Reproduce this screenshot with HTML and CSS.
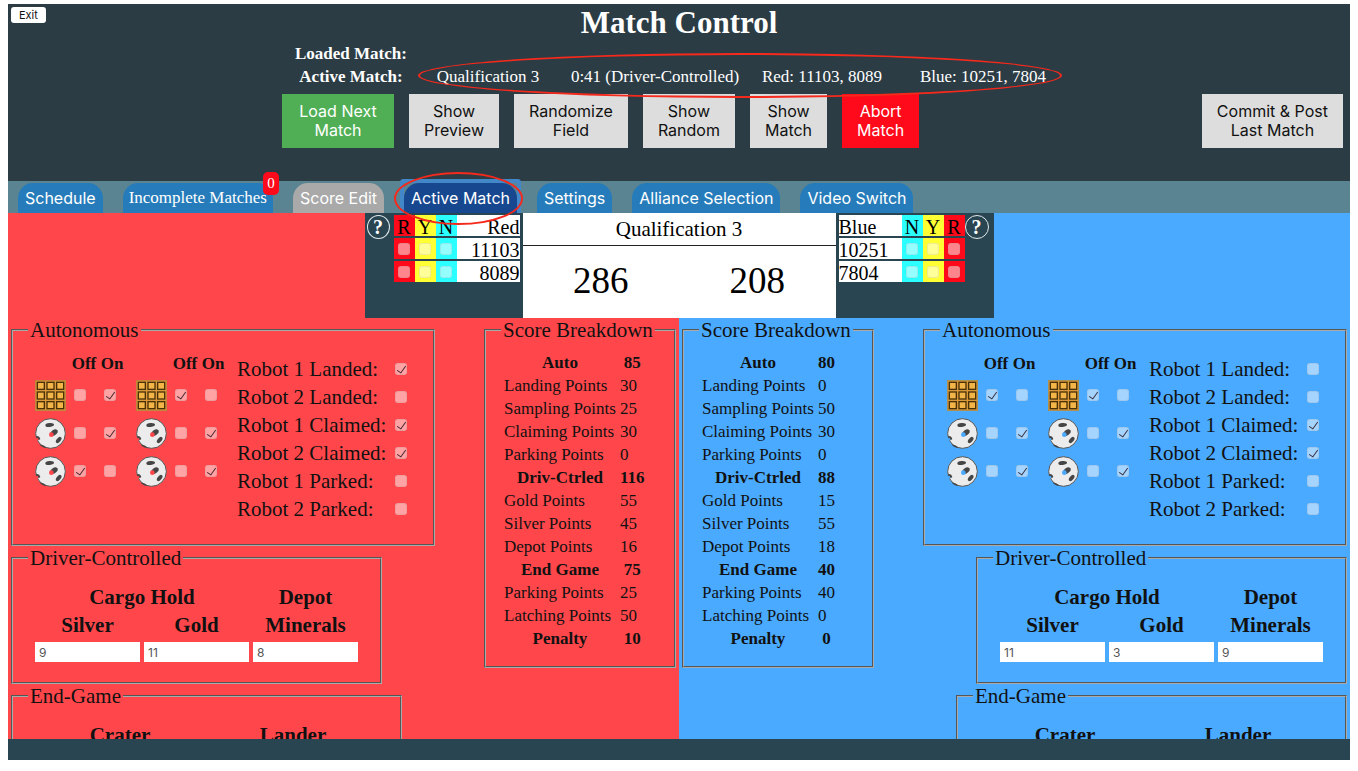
FILE: index.html
```html
<!DOCTYPE html>
<html lang="en">
<head>
<meta charset="utf-8">
<title>Match Control</title>
<link rel="stylesheet" href="styles.css">
</head>
<body>
<svg class="sprite" aria-hidden="true">
  <symbol id="gold" viewBox="0 0 93 93">
    <rect x="1" y="1" width="91" height="91" fill="#d9983a" stroke="#b58a3c" stroke-width="2"/>
    <g fill="#f4b548" stroke="#4a3208" stroke-width="4">
      <rect x="7" y="7" width="21" height="21"/><rect x="36" y="7" width="21" height="21"/><rect x="65" y="7" width="21" height="21"/>
      <rect x="7" y="36" width="21" height="21"/><rect x="36" y="36" width="21" height="21"/><rect x="65" y="36" width="21" height="21"/>
      <rect x="7" y="65" width="21" height="21"/><rect x="36" y="65" width="21" height="21"/><rect x="65" y="65" width="21" height="21"/>
    </g>
  </symbol>
  <symbol id="silver" viewBox="0 0 93 93">
    <circle cx="46.500" cy="46.500" r="44.500" fill="#ececec" stroke="#555" stroke-width="3"/>
    <g fill="#454545">
      <ellipse cx="44" cy="21" rx="13" ry="6" transform="rotate(-5 44 21)"/>
      <ellipse cx="57" cy="44" rx="12" ry="8" transform="rotate(-35 57 44)"/>
      <ellipse cx="71" cy="66" rx="11" ry="6" transform="rotate(-50 71 66)"/>
      <path d="M3 54Q13 52 16 63L11 67Q5 63 3 54Z"/>
      <path d="M14 80Q26 79 34 88L28 89Q19 86 14 80Z"/>
    </g>
    <circle class="hole" cx="49" cy="50" r="7"/>
    <circle class="hole" cx="6" cy="64" r="4"/>
  </symbol>
</svg>

<header class="header">
  <button class="exit" type="button">Exit</button>
  <h1 class="title">Match Control</h1>
  <div class="status">
    <b>Loaded Match:</b>
    <div></div>
    <b>Active Match:</b>
    <div class="status-values">
      <span>Qualification 3</span>
      <span>0:41 (Driver-Controlled)</span>
      <span>Red: 11103, 8089</span>
      <span>Blue: 10251, 7804</span>
    </div>
  </div>
  <div class="actions">
    <button class="action action-go" type="button">Load Next<br>Match</button>
    <button class="action" type="button">Show<br>Preview</button>
    <button class="action" type="button">Randomize<br>Field</button>
    <button class="action" type="button">Show<br>Random</button>
    <button class="action" type="button">Show<br>Match</button>
    <button class="action action-stop" type="button">Abort<br>Match</button>
    <button class="action action-last" type="button">Commit &amp; Post<br>Last Match</button>
  </div>
</header>

<nav class="tabs">
  <button class="tab" type="button">Schedule</button>
  <button class="tab tab-serif" type="button">Incomplete Matches<span class="badge">0</span></button>
  <button class="tab tab-off" type="button">Score Edit</button>
  <button class="tab tab-active" type="button">Active Match</button>
  <button class="tab" type="button">Settings</button>
  <button class="tab" type="button">Alliance Selection</button>
  <button class="tab" type="button">Video Switch</button>
</nav>

<main class="board">
  <section class="scoreboard">
    <div class="side side-red">
      <button class="help" type="button">?</button>
      <table class="cards">
        <tr><th class="r">R</th><th class="y">Y</th><th class="n">N</th><td class="team">Red</td></tr>
        <tr><td class="r"><input type="checkbox" disabled aria-label="11103 red card"></td><td class="y"><input type="checkbox" disabled aria-label="11103 yellow card"></td><td class="n"><input type="checkbox" disabled aria-label="11103 no show"></td><td class="team">11103</td></tr>
        <tr><td class="r"><input type="checkbox" disabled aria-label="8089 red card"></td><td class="y"><input type="checkbox" disabled aria-label="8089 yellow card"></td><td class="n"><input type="checkbox" disabled aria-label="8089 no show"></td><td class="team">8089</td></tr>
      </table>
    </div>
    <div class="score">
      <div class="score-name">Qualification 3</div>
      <div class="score-values"><span>286</span><span>208</span></div>
    </div>
    <div class="side side-blue">
      <table class="cards">
        <tr><td class="team">Blue</td><th class="n">N</th><th class="y">Y</th><th class="r">R</th></tr>
        <tr><td class="team">10251</td><td class="n"><input type="checkbox" disabled aria-label="10251 no show"></td><td class="y"><input type="checkbox" disabled aria-label="10251 yellow card"></td><td class="r"><input type="checkbox" disabled aria-label="10251 red card"></td></tr>
        <tr><td class="team">7804</td><td class="n"><input type="checkbox" disabled aria-label="7804 no show"></td><td class="y"><input type="checkbox" disabled aria-label="7804 yellow card"></td><td class="r"><input type="checkbox" disabled aria-label="7804 red card"></td></tr>
      </table>
      <button class="help" type="button">?</button>
    </div>
  </section>

  <section class="half half-red">
    <div class="forms">
      <fieldset class="box">
        <legend>Autonomous</legend>
        <div class="pane auto">
          <table class="samples">
            <tr><td></td><th>Off</th><th>On</th></tr>
            <tr><td><svg class="mineral"><use href="#gold"/></svg></td><td><input type="checkbox" disabled aria-label="Off"></td><td><input type="checkbox" disabled checked aria-label="On"></td></tr>
            <tr><td><svg class="mineral"><use href="#silver"/></svg></td><td><input type="checkbox" disabled aria-label="Off"></td><td><input type="checkbox" disabled checked aria-label="On"></td></tr>
            <tr><td><svg class="mineral"><use href="#silver"/></svg></td><td><input type="checkbox" disabled checked aria-label="Off"></td><td><input type="checkbox" disabled aria-label="On"></td></tr>
          </table>
          <table class="samples">
            <tr><td></td><th>Off</th><th>On</th></tr>
            <tr><td><svg class="mineral"><use href="#gold"/></svg></td><td><input type="checkbox" disabled checked aria-label="Off"></td><td><input type="checkbox" disabled aria-label="On"></td></tr>
            <tr><td><svg class="mineral"><use href="#silver"/></svg></td><td><input type="checkbox" disabled aria-label="Off"></td><td><input type="checkbox" disabled checked aria-label="On"></td></tr>
            <tr><td><svg class="mineral"><use href="#silver"/></svg></td><td><input type="checkbox" disabled aria-label="Off"></td><td><input type="checkbox" disabled checked aria-label="On"></td></tr>
          </table>
          <div class="robots">
            <label>Robot 1 Landed: <input type="checkbox" disabled checked></label>
            <label>Robot 2 Landed: <input type="checkbox" disabled></label>
            <label>Robot 1 Claimed: <input type="checkbox" disabled checked></label>
            <label>Robot 2 Claimed: <input type="checkbox" disabled checked></label>
            <label>Robot 1 Parked: <input type="checkbox" disabled></label>
            <label>Robot 2 Parked: <input type="checkbox" disabled></label>
          </div>
        </div>
      </fieldset>
      <fieldset class="box">
        <legend>Driver-Controlled</legend>
        <div class="pane cargo">
          <b class="wide">Cargo Hold</b><b>Depot</b>
          <label for="rs">Silver</label><label for="rg">Gold</label><label for="rm">Minerals</label>
          <input class="count" id="rs" type="text" value="9"><input class="count" id="rg" type="text" value="11"><input class="count" id="rm" type="text" value="8">
        </div>
      </fieldset>
      <fieldset class="box">
        <legend>End-Game</legend>
        <div class="pane endgame"><b>Crater</b><b>Lander</b></div>
      </fieldset>
    </div>
    <fieldset class="box breakdown">
      <legend>Score Breakdown</legend>
      <table class="points">
        <tr><th>Auto</th><th>85</th></tr>
        <tr><td>Landing Points</td><td>30</td></tr>
        <tr><td>Sampling Points</td><td>25</td></tr>
        <tr><td>Claiming Points</td><td>30</td></tr>
        <tr><td>Parking Points</td><td>0</td></tr>
        <tr><th>Driv-Ctrled</th><th>116</th></tr>
        <tr><td>Gold Points</td><td>55</td></tr>
        <tr><td>Silver Points</td><td>45</td></tr>
        <tr><td>Depot Points</td><td>16</td></tr>
        <tr><th>End Game</th><th>75</th></tr>
        <tr><td>Parking Points</td><td>25</td></tr>
        <tr><td>Latching Points</td><td>50</td></tr>
        <tr><th>Penalty</th><th>10</th></tr>
      </table>
    </fieldset>
  </section>

  <section class="half half-blue">
    <fieldset class="box breakdown">
      <legend>Score Breakdown</legend>
      <table class="points">
        <tr><th>Auto</th><th>80</th></tr>
        <tr><td>Landing Points</td><td>0</td></tr>
        <tr><td>Sampling Points</td><td>50</td></tr>
        <tr><td>Claiming Points</td><td>30</td></tr>
        <tr><td>Parking Points</td><td>0</td></tr>
        <tr><th>Driv-Ctrled</th><th>88</th></tr>
        <tr><td>Gold Points</td><td>15</td></tr>
        <tr><td>Silver Points</td><td>55</td></tr>
        <tr><td>Depot Points</td><td>18</td></tr>
        <tr><th>End Game</th><th>40</th></tr>
        <tr><td>Parking Points</td><td>40</td></tr>
        <tr><td>Latching Points</td><td>0</td></tr>
        <tr><th>Penalty</th><th>0</th></tr>
      </table>
    </fieldset>
    <div class="forms">
      <fieldset class="box">
        <legend>Autonomous</legend>
        <div class="pane auto">
          <table class="samples">
            <tr><td></td><th>Off</th><th>On</th></tr>
            <tr><td><svg class="mineral"><use href="#gold"/></svg></td><td><input type="checkbox" disabled checked aria-label="Off"></td><td><input type="checkbox" disabled aria-label="On"></td></tr>
            <tr><td><svg class="mineral"><use href="#silver"/></svg></td><td><input type="checkbox" disabled aria-label="Off"></td><td><input type="checkbox" disabled checked aria-label="On"></td></tr>
            <tr><td><svg class="mineral"><use href="#silver"/></svg></td><td><input type="checkbox" disabled aria-label="Off"></td><td><input type="checkbox" disabled checked aria-label="On"></td></tr>
          </table>
          <table class="samples">
            <tr><td></td><th>Off</th><th>On</th></tr>
            <tr><td><svg class="mineral"><use href="#gold"/></svg></td><td><input type="checkbox" disabled checked aria-label="Off"></td><td><input type="checkbox" disabled aria-label="On"></td></tr>
            <tr><td><svg class="mineral"><use href="#silver"/></svg></td><td><input type="checkbox" disabled aria-label="Off"></td><td><input type="checkbox" disabled checked aria-label="On"></td></tr>
            <tr><td><svg class="mineral"><use href="#silver"/></svg></td><td><input type="checkbox" disabled aria-label="Off"></td><td><input type="checkbox" disabled checked aria-label="On"></td></tr>
          </table>
          <div class="robots">
            <label>Robot 1 Landed: <input type="checkbox" disabled></label>
            <label>Robot 2 Landed: <input type="checkbox" disabled></label>
            <label>Robot 1 Claimed: <input type="checkbox" disabled checked></label>
            <label>Robot 2 Claimed: <input type="checkbox" disabled checked></label>
            <label>Robot 1 Parked: <input type="checkbox" disabled></label>
            <label>Robot 2 Parked: <input type="checkbox" disabled></label>
          </div>
        </div>
      </fieldset>
      <fieldset class="box">
        <legend>Driver-Controlled</legend>
        <div class="pane cargo">
          <b class="wide">Cargo Hold</b><b>Depot</b>
          <label for="bs">Silver</label><label for="bg">Gold</label><label for="bm">Minerals</label>
          <input class="count" id="bs" type="text" value="11"><input class="count" id="bg" type="text" value="3"><input class="count" id="bm" type="text" value="9">
        </div>
      </fieldset>
      <fieldset class="box">
        <legend>End-Game</legend>
        <div class="pane endgame"><b>Crater</b><b>Lander</b></div>
      </fieldset>
    </div>
  </section>
</main>
<footer class="footer"></footer>
</body>
</html>
```

FILE: styles.css
```css
* { box-sizing: border-box; }

body {
  --slate: #294552;
  --red: #ff474b;
  --blue: #4aaaff;
  display: flex;
  flex-direction: column;
  height: 100vh;
  margin: 0;
  padding: 4px 8px 11px;
  background: #fff;
  color: #111;
  font-family: "Liberation Serif", "Times New Roman", serif;
  font-size: 17px;
}

button { cursor: pointer; }
.sprite { position: absolute; width: 0; height: 0; }

/* Header */
.header {
  position: relative;
  flex: none;
  padding: 0 7px 33px 274px;
  background: #2c3c44;
  color: #fff;
}
.exit {
  position: absolute;
  top: 3px;
  left: 3px;
  height: 16px;
  padding: 0 8px;
  border: 0;
  border-radius: 3px;
  background: #fff;
  color: #111;
  font: 11px/16px Inter, sans-serif;
}
.title {
  margin: 0 0 0 -267px;
  font-size: 31px;
  line-height: 38px;
  text-align: center;
}
.status {
  display: grid;
  grid-template-columns: 138px 1fr;
  grid-auto-rows: 23px;
  line-height: 23px;
}
.status b { text-align: center; }
.status-values {
  position: relative;
  display: grid;
  grid-template-columns: 164px 170px 164px 158px;
  justify-self: start;
  margin-left: -14px;
  text-align: center;
}
.status-values::after {
  content: "";
  position: absolute;
  z-index: 1;
  inset: -12px 0 -10px 12px;
  border: 2px solid #f5291c;
  border-radius: 50%;
  pointer-events: none;
}
.actions {
  display: flex;
  gap: 15px;
  margin-top: 6px;
}
.action {
  padding: 8px 15px;
  border: 0;
  background: #ddd;
  color: #111;
  font: 16px/19px Inter, sans-serif;
}
.action-go { min-width: 112px; background: #50af55; color: #fff; }
.action-stop { background: #ff0a1a; color: #fff; }
.action-last { margin-left: auto; }

/* Tabs */
.tabs {
  display: flex;
  flex: none;
  gap: 20px;
  height: 32px;
  padding: 2px 10px 0;
  background: #5b8492;
}
.tab {
  position: relative;
  padding: 0 7px;
  border: 0;
  border-radius: 15px 15px 0 0;
  background: #267cba;
  color: #fff;
  font: 16px/30px Inter, sans-serif;
}
.tab-serif { padding: 0 6px; font: 17px/30px "Liberation Serif", serif; }
.tab-off { background: #a9a9a9; }
.tab-active { background: #17488f; }
.tab-active::before {
  content: "";
  position: absolute;
  inset: -4px -4px 0;
  border: 4px solid #4287c7;
  border-bottom: 0;
  border-radius: 4px 4px 0 0;
}
.tab-active::after {
  content: "";
  position: absolute;
  z-index: 1;
  inset: -11px -6px -12px -10px;
  border: 2px solid #f5291c;
  border-radius: 50%;
  pointer-events: none;
}
.badge {
  position: absolute;
  top: -11px;
  right: -6px;
  width: 16px;
  border-radius: 5px;
  background: #ff0a1a;
  font-size: 15px;
  line-height: 23px;
  text-align: center;
}

/* Board */
.board {
  display: grid;
  flex: 1;
  grid-template-columns: 1fr 1fr;
  grid-template-rows: auto 1fr;
  min-height: 0;
  overflow: hidden;
  background: linear-gradient(to right, var(--red) 50%, var(--blue) 50%);
}
.scoreboard {
  display: grid;
  grid-column: 1 / -1;
  grid-template-columns: 157px 315px 157px;
  justify-self: center;
  height: 105px;
  background: var(--slate);
  color: #000;
}
.side { display: flex; align-items: flex-start; padding: 0 2px; }
.side-red { gap: 4px; }
.help {
  width: 24px;
  height: 24px;
  margin-top: 2px;
  padding: 0;
  border: 1px solid #e4eaec;
  border-radius: 50%;
  background: none;
  color: #fff;
  font: bold 20px/22px "Liberation Serif", serif;
}
.cards {
  width: 126px;
  border-spacing: 0 2px;
  font-size: 20px;
  line-height: 17px;
  table-layout: fixed;
}
.cards th, .cards td { width: 21px; height: 21px; padding: 0; font-weight: normal; text-align: center; }
.cards th, .cards .team { padding-top: 4px; }
.cards input[type="checkbox"] { display: block; margin: 0 auto; }
.cards .r { background: #ff0a1a; }
.cards .y { background: #ffff33; }
.cards .n { background: #2bffff; }
.cards .team { width: 63px; background: #fff; text-align: left; }
.side-red .cards .team { text-align: right; }
.score { display: flex; flex-direction: column; background: #fff; border: 0 solid var(--slate); border-width: 0 1px; }
.score-name { border-bottom: 1px solid #222; font-size: 21px; line-height: 32px; text-align: center; }
.score-values {
  display: grid;
  flex: 1;
  grid-template-columns: 1fr 1fr;
  align-items: center;
  padding-bottom: 4px;
  font-size: 37px;
  text-align: center;
}

.half { display: flex; justify-content: space-between; align-items: flex-start; min-width: 0; padding: 0 3px; }
.half-red { --side: var(--red); }
.half-blue { --side: var(--blue); }
.forms { display: flex; flex-direction: column; align-items: flex-start; }
.half-blue .forms { align-items: flex-end; }
.box {
  margin: 0;
  padding: 0 15px;
  border: 2px groove #aaa;
  font-size: 21px;
}
.box legend { padding: 0 2px; line-height: 24px; }
.pane { padding: 13px 7px 20px; }

input[type="checkbox"] {
  appearance: none;
  position: relative;
  flex: none;
  width: 12px;
  height: 12px;
  margin: 0;
  border: 1px solid rgba(128, 128, 128, 0.15);
  border-radius: 3px;
  background: rgba(255, 255, 255, 0.5);
}
input[type="checkbox"]:checked::after {
  content: "";
  position: absolute;
  top: 0;
  left: 3px;
  width: 4px;
  height: 8px;
  border: solid rgba(40, 20, 30, 0.85);
  border-width: 0 1px 1px 0;
  transform: rotate(35deg);
}

.auto { display: flex; align-items: flex-start; gap: 11px; padding-bottom: 21px; }
.samples { width: 90px; border-collapse: collapse; font-size: 17px; table-layout: fixed; }
.samples td, .samples th { height: 38px; padding: 0; }
.samples tr:first-child > * { height: 21px; line-height: 18px; vertical-align: top; }
.samples tr > :first-child { width: 34px; }
.samples tr > :nth-child(2) { width: 30px; }
.samples td + td { padding-left: 5px; }
.samples input { display: block; }
.mineral { display: block; width: 31px; height: 31px; }
.hole { fill: var(--side); }
.robots { display: flex; flex-direction: column; width: 174px; }
.robots label { display: flex; align-items: center; justify-content: space-between; padding-right: 4px; line-height: 28px; }

.cargo {
  display: grid;
  grid-template-columns: repeat(3, 105px);
  column-gap: 4px;
  line-height: 28px;
  text-align: center;
}
.cargo label { font-weight: bold; }
.wide { grid-column: span 2; }
.count {
  width: 100%;
  height: 20px;
  margin-top: 3px;
  padding: 0 4px;
  border: 0;
  background: #fff;
  color: #555;
  font: 12px Inter, sans-serif;
}
.endgame {
  display: grid;
  grid-template-columns: 170px 170px;
  column-gap: 3px;
  line-height: 28px;
  text-align: center;
}

.breakdown { width: 192px; padding-bottom: 15px; }
.points { margin-top: 8px; font-size: 17px; line-height: 19px; border-spacing: 2px; white-space: nowrap; }
.points td, .points th { padding: 1px; }

.footer { flex: none; height: 21px; background: var(--slate); }
```
